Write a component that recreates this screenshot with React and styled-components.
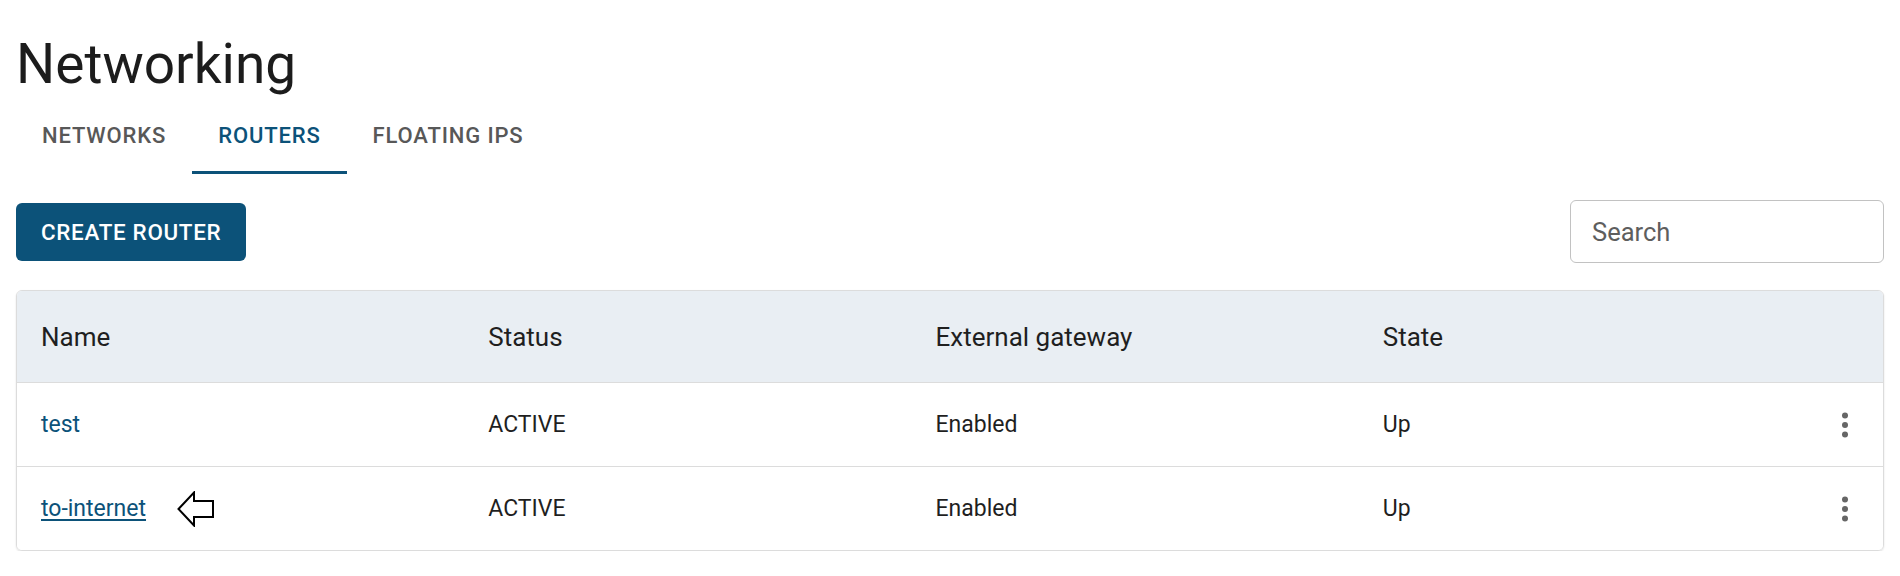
import React from "react";
import styled, { createGlobalStyle } from "styled-components";

const Global = createGlobalStyle`
  html, body { margin: 0; padding: 0; background: #ffffff; }
  body { font-family: Roboto, "Noto Sans", "Liberation Sans", sans-serif; color: #212121; }
  * { box-sizing: border-box; }
`;

const Page = styled.div`
  padding: 31px 16px 0 16px;
  display: flex;
  flex-direction: column;
`;

const Title = styled.h1`
  margin: 0;
  font-size: 55px;
  font-weight: 400;
  line-height: 66px;
  color: #1c1c1c;
`;

const TabBar = styled.div`
  display: flex;
  height: 77px;
`;

const Tab = styled.div`
  position: relative;
  display: flex;
  align-items: center;
  justify-content: center;
  padding: 0 26px;
  font-size: 22px;
  font-weight: 500;
  letter-spacing: 0.85px;
  text-transform: uppercase;
  color: ${(p) => (p.$active ? "#0c5279" : "#585858")};
  &::after {
    content: "";
    position: absolute;
    left: 0;
    right: 0;
    bottom: 0;
    height: 3px;
    background: ${(p) => (p.$active ? "#0c5279" : "transparent")};
  }
`;

const Toolbar = styled.div`
  display: flex;
  align-items: center;
  justify-content: space-between;
  margin-top: 26px;
  height: 63px;
`;

const PrimaryButton = styled.button`
  height: 58px;
  padding: 0 25px;
  border: none;
  border-radius: 6px;
  background: #0c5279;
  color: #ffffff;
  font-family: Roboto, "Liberation Sans", sans-serif;
  font-size: 22.4px;
  font-weight: 500;
  letter-spacing: 0.7px;
  text-transform: uppercase;
  cursor: pointer;
`;

const SearchInput = styled.input`
  width: 314px;
  height: 63px;
  border: 1px solid #c2c2c2;
  border-radius: 6px;
  padding: 0 21px;
  font-family: Roboto, "Liberation Sans", sans-serif;
  font-size: 25.5px;
  color: #212121;
  outline: none;
  &::placeholder { color: #5e5e5e; }
`;

const Table = styled.div`
  margin-top: 27px;
  border: 1px solid #dcdcdc;
  border-radius: 6px;
  overflow: hidden;
  box-shadow: 0 1px 2px rgba(0, 0, 0, 0.12);
`;

const Row = styled.div`
  display: grid;
  grid-template-columns: 1fr 1fr 1fr 1fr 77px;
  align-items: center;
  height: ${(p) => (p.$head ? "92px" : "84px")};
  background: ${(p) => (p.$head ? "#e9eef3" : "#ffffff")};
  border-bottom: 1px solid #dcdcdc;
  &:last-child { border-bottom: none; height: 83px; }
`;

const Cell = styled.div`
  display: flex;
  align-items: center;
  padding-left: 24px;
  font-size: ${(p) => (p.$head ? "26px" : "23px")};
  color: #1f1f1f;
`;

const ActionCell = styled.div`
  display: flex;
  justify-content: center;
  align-items: center;
`;

const NameLink = styled.a`
  color: #0c5279;
  text-decoration: ${(p) => (p.$underline ? "underline" : "none")};
  text-underline-offset: 3px;
  text-decoration-thickness: 2px;
  cursor: pointer;
`;

const Pointer = styled.svg`
  margin-left: 31px;
  display: block;
`;

const Kebab = () => (
  <svg width="8" height="28" viewBox="0 0 8 28" aria-hidden="true">
    <circle cx="4" cy="4.5" r="3" fill="#666666" />
    <circle cx="4" cy="14" r="3" fill="#666666" />
    <circle cx="4" cy="23.5" r="3" fill="#666666" />
  </svg>
);

const routers = [
  { name: "test", status: "ACTIVE", gateway: "Enabled", state: "Up" },
  { name: "to-internet", status: "ACTIVE", gateway: "Enabled", state: "Up", marked: true },
];

export default function App() {
  return (
    <>
      <Global />
      <Page>
        <Title>Networking</Title>
        <TabBar>
          <Tab>Networks</Tab>
          <Tab $active>Routers</Tab>
          <Tab>Floating IPs</Tab>
        </TabBar>
        <Toolbar>
          <PrimaryButton>Create Router</PrimaryButton>
          <SearchInput placeholder="Search" />
        </Toolbar>
        <Table>
          <Row $head>
            <Cell $head>Name</Cell>
            <Cell $head>Status</Cell>
            <Cell $head>External gateway</Cell>
            <Cell $head>State</Cell>
            <ActionCell />
          </Row>
          {routers.map((r) => (
            <Row key={r.name}>
              <Cell>
                <NameLink $underline={r.marked}>{r.name}</NameLink>
                {r.marked && (
                  <Pointer width="38" height="36" viewBox="0 0 38 36" aria-hidden="true">
                    <polygon
                      points="1.5,18 17,1.5 17,10 36,10 36,26 17,26 17,34.5"
                      fill="#ffffff"
                      stroke="#000000"
                      strokeWidth="2"
                      strokeLinejoin="miter"
                    />
                  </Pointer>
                )}
              </Cell>
              <Cell>{r.status}</Cell>
              <Cell>{r.gateway}</Cell>
              <Cell>{r.state}</Cell>
              <ActionCell>
                <Kebab />
              </ActionCell>
            </Row>
          ))}
        </Table>
      </Page>
    </>
  );
}
